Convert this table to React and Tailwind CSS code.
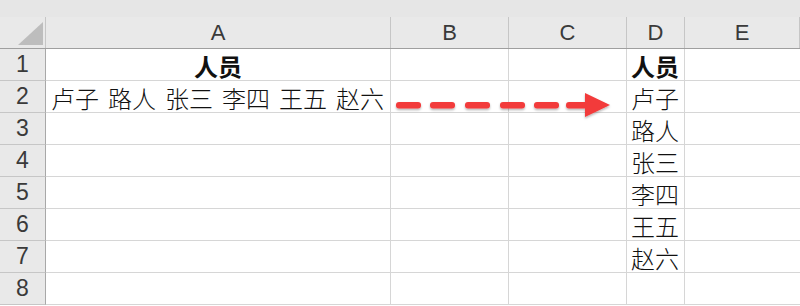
import React from 'react';

const cols = [
  { key: 'A', w: 'w-[345px]' },
  { key: 'B', w: 'w-[118px]' },
  { key: 'C', w: 'w-[118px]' },
  { key: 'D', w: 'w-[58px]' },
  { key: 'E', w: 'w-[115px]' },
];

const people = ['卢子', '路人', '张三', '李四', '王五', '赵六'];

// column D holds the header, then one name per row
const colD = ['人员', ...people];

const cjk = { fontFamily: '"Noto Sans CJK SC", "Noto Sans", sans-serif' };

function DashedArrow() {
  return (
    <svg width="230" height="34" viewBox="0 0 230 34" className="absolute left-[388px] top-[88px]">
      <defs>
        <filter id="shade" x="-10%" y="-50%" width="120%" height="200%">
          <feDropShadow dx="0" dy="1.5" stdDeviation="1.2" floodColor="#000" floodOpacity="0.3" />
        </filter>
      </defs>
      <g fill="#f23b3b" filter="url(#shade)">
        {[8, 42, 77, 112, 146].map((x) => (
          <rect key={x} x={x} y="14" width="25" height="6.5" rx="3" />
        ))}
        <path d="M181 14 H197 V5 L222 17 L197 29 V20.5 H181 Q178 20.5 178 17.2 Q178 14 181 14 Z" />
      </g>
    </svg>
  );
}

export default function App() {
  return (
    <div className="relative w-[800px] h-[306px] overflow-hidden bg-white">
      <div className="h-[17px] bg-[#e6e6e6]" />

      {/* column letters */}
      <div className="flex h-[32px] bg-[#e9e9e9] border-b border-[#9f9f9f]">
        <div className="relative w-[46px] shrink-0 border-r border-[#c6c6c6]">
          <svg width="26" height="24" className="absolute left-[18px] top-[5px]">
            <polygon points="25,0 25,23 0,23" fill="#bdbdbd" />
          </svg>
        </div>
        {cols.map((c) => (
          <div
            key={c.key}
            className={`${c.w} shrink-0 border-r border-[#c6c6c6] flex items-center justify-center text-[22px] text-[#3a3a3a]`}
            style={{ fontFamily: '"Liberation Sans", sans-serif' }}
          >
            {c.key}
          </div>
        ))}
      </div>

      {/* rows */}
      {Array.from({ length: 8 }, (_, i) => {
        const row = i + 1;
        return (
          <div key={row} className="flex h-[32px]">
            <div
              className="w-[46px] shrink-0 bg-[#e9e9e9] border-r border-b border-r-[#a8a8a8] border-b-[#c6c6c6] flex items-center justify-center text-[23px] text-[#3a3a3a]"
              style={{ fontFamily: '"Liberation Sans", sans-serif' }}
            >
              {row}
            </div>

            <div className="w-[345px] shrink-0 border-r border-b border-[#d6d6d6] flex items-center text-[24px] text-[#111] leading-none" style={cjk}>
              {row === 1 && <span className="w-full text-center font-bold pt-[2px]">人员</span>}
              {row === 2 && (
                <div className="flex gap-[9px] pl-[5px] pt-[3px] font-light">
                  {people.map((p) => (
                    <span key={p}>{p}</span>
                  ))}
                </div>
              )}
            </div>
            <div className="w-[118px] shrink-0 border-r border-b border-[#d6d6d6]" />
            <div className="w-[118px] shrink-0 border-r border-b border-[#d6d6d6]" />
            <div className="w-[58px] shrink-0 border-r border-b border-[#d6d6d6] flex items-center pl-[4px] pt-[3px] text-[24px] text-[#111] leading-none" style={cjk}>
              {colD[i] && <span className={row === 1 ? 'font-bold' : 'font-light'}>{colD[i]}</span>}
            </div>
            <div className="w-[115px] shrink-0 border-b border-[#d6d6d6]" />
          </div>
        );
      })}

      <DashedArrow />
    </div>
  );
}
